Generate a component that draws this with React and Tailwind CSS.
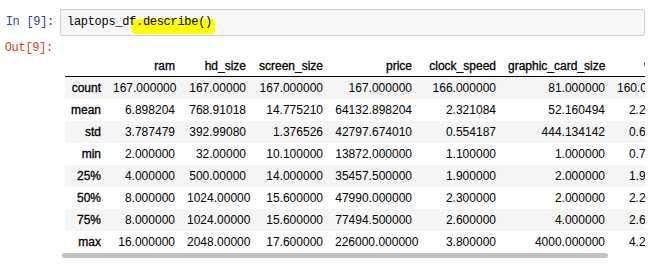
const columns = ['ram', 'hd_size', 'screen_size', 'price', 'clock_speed', 'graphic_card_size', 'weight']

const rows = [
  ['count', '167.000000', '167.00000', '167.000000', '167.000000', '166.000000', '81.000000', '160.000000'],
  ['mean', '6.898204', '768.91018', '14.775210', '64132.898204', '2.321084', '52.160494', '2.216875'],
  ['std', '3.787479', '392.99080', '1.376526', '42797.674010', '0.554187', '444.134142', '0.651389'],
  ['min', '2.000000', '32.00000', '10.100000', '13872.000000', '1.100000', '1.000000', '0.780000'],
  ['25%', '4.000000', '500.00000', '14.000000', '35457.500000', '1.900000', '2.000000', '1.900000'],
  ['50%', '8.000000', '1024.00000', '15.600000', '47990.000000', '2.300000', '2.000000', '2.200000'],
  ['75%', '8.000000', '1024.00000', '15.600000', '77494.500000', '2.600000', '4.000000', '2.600000'],
  ['max', '16.000000', '2048.00000', '17.600000', '226000.000000', '3.800000', '4000.000000', '4.200000'],
]

const grid = 'grid grid-cols-[42px_74px_71px_77px_89px_84px_109px_74px] w-[620px]'
const mono = "font-['Liberation_Mono','DejaVu_Sans_Mono',monospace] text-[12px] tracking-[-0.3px]"
const bold = '[-webkit-text-stroke:0.3px_#000]'

const App = () => {
  return (
    <div className="w-[658px] h-[266px] bg-white overflow-hidden font-['Liberation_Sans',Arial,sans-serif]">
      {/* input cell */}
      <div className="flex pt-[9px]">
        <div className={`w-[60px] shrink-0 pr-[6px] text-right leading-[27px] text-[#303F9F] ${mono}`}>In [9]:</div>
        <div className={`w-[585px] shrink-0 h-[27px] border border-[#cfcfcf] bg-[#f7f7f7] rounded-[2px] pl-[6px] leading-[25px] text-black isolate ${mono}`}>
          laptops_df
          <span className="relative">
            <span className="absolute left-[-4px] right-[-3px] top-[4px] bottom-[-5px] bg-[#ffff00] rounded-[4px] -z-10" />
            .describe()
          </span>
        </div>
      </div>

      {/* output */}
      <div className="flex mt-[4px]">
        <div className={`w-[60px] shrink-0 pr-[7px] text-right leading-[17px] text-[#D84315] ${mono}`}>Out[9]:</div>
        <div className="ml-[2px] w-[583px] shrink-0 pt-[15px]">
          <div className="w-[583px] overflow-hidden pl-[3px] text-[12px] text-black">
            <div className={`${grid} h-[22px] items-center border-b border-black`}>
              <div />
              {columns.map(c => (
                <div key={c} className={`px-[6px] text-right whitespace-nowrap ${bold}`}>{c}</div>
              ))}
            </div>
            {rows.map((r, i) => (
              <div key={r[0]} className={`${grid} h-[22px] items-center ${i % 2 === 0 ? 'bg-[#f5f5f5]' : 'bg-white'}`}>
                <div className={`px-[6px] text-right whitespace-nowrap ${bold}`}>{r[0]}</div>
                {r.slice(1).map((v, j) => (
                  <div key={j} className="px-[6px] text-right whitespace-nowrap">{v}</div>
                ))}
              </div>
            ))}
          </div>
          <div className="w-[546px] h-[5px] rounded-full bg-[#c1c1c1]" />
        </div>
      </div>
    </div>
  )
}

export default App
